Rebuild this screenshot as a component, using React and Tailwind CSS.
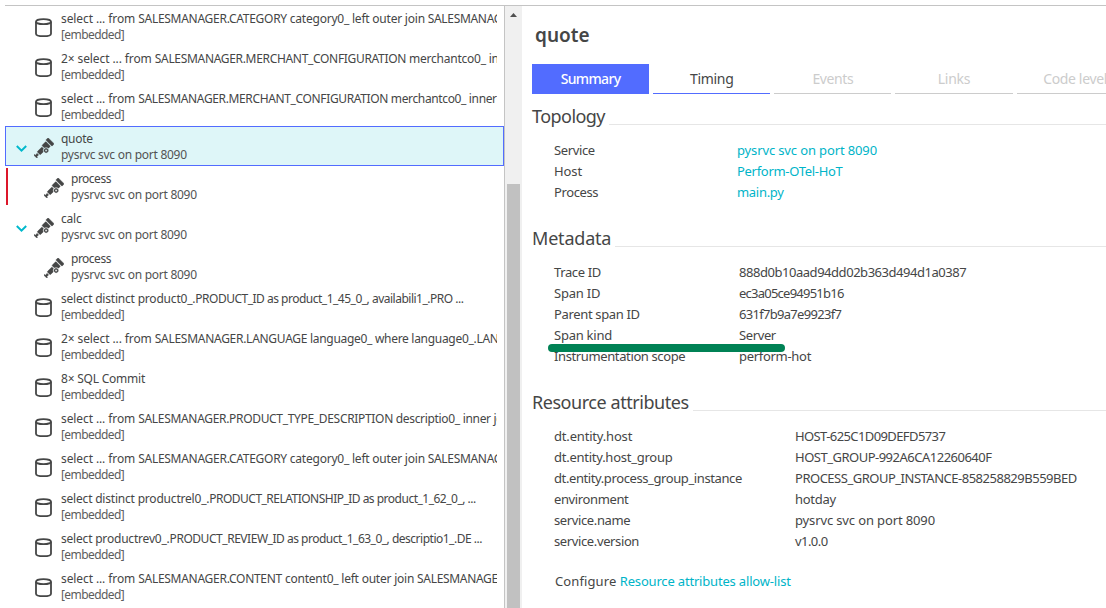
import { SiOpentelemetry } from "react-icons/si";

const LOW = "tracking-[-0.22px]";
const CAP = "tracking-[-0.32px]";
const LEAD = "tracking-[-0.1px]";
const TAIL = "tracking-[-0.5px]";

const spans = [
  { kind: "db", title: [["select ... from ", LEAD], ["SALESMANAGER.CATEGORY", "tracking-[-0.28px]"], [" category0_ left outer join ", LOW], ["SALESMANAGER.CATEGORY", CAP]] },
  { kind: "db", title: [["2× select ... from ", LEAD], ["SALESMANAGER.MERCHANT_CONFIGURATION", CAP], [" merchantco0_ inner join", LOW]] },
  { kind: "db", title: [["select ... from ", LEAD], ["SALESMANAGER.MERCHANT_CONFIGURATION", "tracking-[-0.36px]"], [" merchantco0_ inner", "tracking-[-0.36px]"]] },
  { kind: "otel", title: [["quote", "tracking-[-0.28px]"]], open: true, selected: true },
  { kind: "otel", title: [["process", "tracking-[-0.5px]"]], child: true, failed: true },
  { kind: "otel", title: [["calc", LOW]], open: true },
  { kind: "otel", title: [["process", "tracking-[-0.5px]"]], child: true },
  { kind: "db", title: [["select distinct product0_.", "tracking-[-0.2px]"], ["PRODUCT_ID", "tracking-[-0.5px]"], [" as product_1_45_0_, availabili1_.PRO ...", TAIL]] },
  { kind: "db", title: [["2× select ... from ", LEAD], ["SALESMANAGER.LANGUAGE", "tracking-[-0.28px]"], [" language0_ where language0_.LANGUAGE", "tracking-[-0.3px]"]] },
  { kind: "db", title: [["8× SQL Commit", LOW]] },
  { kind: "db", title: [["select ... from ", LEAD], ["SALESMANAGER.PRODUCT_TYPE_DESCRIPTION", CAP], [" descriptio0_ inner join", "tracking-[-0.32px]"]] },
  { kind: "db", title: [["select ... from ", LEAD], ["SALESMANAGER.CATEGORY", "tracking-[-0.28px]"], [" category0_ left outer join ", LOW], ["SALESMANAGER.CATEGORY", CAP]] },
  { kind: "db", title: [["select distinct productrel0_.", "tracking-[-0.2px]"], ["PRODUCT_RELATIONSHIP_ID", "tracking-[-0.52px]"], [" as product_1_62_0_, ...", TAIL]] },
  { kind: "db", title: [["select productrev0_.", "tracking-[-0.2px]"], ["PRODUCT_REVIEW_ID", "tracking-[-0.46px]"], [" as product_1_63_0_, descriptio1_.DE ...", TAIL]] },
  { kind: "db", title: [["select ... from ", LEAD], ["SALESMANAGER.CONTENT", "tracking-[-0.28px]"], [" content0_ left outer join ", LOW], ["SALESMANAGER.CONTENT", CAP]] },
];

function Cylinder() {
  return (
    <svg className="mt-1 h-5 w-[17px]" viewBox="0 0 17 20" fill="none" stroke="#454646" strokeWidth="1.8">
      <ellipse cx="8.5" cy="3.7" rx="7.5" ry="2.5" />
      <path d="M1 3.7V15.7C1 17.2 4.1 18.2 8.5 18.2S16 17.2 16 15.7V3.7" />
    </svg>
  );
}

function Chevron() {
  return (
    <svg className="h-2 w-3" viewBox="0 0 12 8" fill="none" stroke="#00b9cc" strokeWidth="2">
      <path d="M0.8 1L5.5 5.7L10.2 1" />
    </svg>
  );
}

function SpanRow({ kind, title, open, selected, child, failed }) {
  return (
    <div className={`flex h-10 shrink-0 border ${selected ? "border-[#526cff] bg-[#def6f8]" : "border-transparent"}`}>
      <div className={`my-px h-[37px] w-0.5 shrink-0 ${failed ? "bg-[#dc172a]" : ""}`} />
      <div className="flex w-5 shrink-0 items-center pt-1.5 pl-2">{open && <Chevron />}</div>
      <div className={`flex w-[21px] shrink-0 items-center justify-center ${child ? "ml-[15px]" : "ml-[5px]"}`}>
        {kind === "db" ? (
          <Cylinder />
        ) : (
          <SiOpentelemetry className="mt-[3px] h-5 w-5 shrink-0 stroke-[#454646] stroke-[0.5]" />
        )}
      </div>
      <div className="mr-1.5 ml-[7px] flex min-w-0 flex-1 flex-col overflow-hidden pt-1 text-xs leading-4 whitespace-pre">
        <div>
          {title.map(([text, tracking], i) => (
            <span key={i} className={tracking}>{text}</span>
          ))}
        </div>
        {kind === "db" ? (
          <div className="tracking-[-0.58px] text-[#5c5d5d]">[embedded]</div>
        ) : (
          <div className="tracking-[-0.27px] text-[#525353]">pysrvc svc on port 8090</div>
        )}
      </div>
    </div>
  );
}

function Section({ title, tracking, children }) {
  return (
    <section className="mb-[22px]">
      <div className="mb-[9px] flex h-7 items-center">
        <h2 className={`-mt-0.5 text-lg leading-7 whitespace-nowrap ${tracking}`}>{title}</h2>
        <div className="mb-1.5 ml-1 h-px flex-1 self-end bg-[#e6e6e6]" />
      </div>
      <dl className="pl-[22px]">{children}</dl>
    </section>
  );
}

function Field({ label, value, labelWidth, labelTracking = "tracking-[-0.38px]", tracking, link }) {
  return (
    <div className="flex h-[21px] items-center text-[13px] leading-[21px] whitespace-nowrap">
      <dt className={`${labelWidth} shrink-0 ${labelTracking}`}>{label}</dt>
      <dd className={`${tracking} ${link ? "text-[#00b4c8]" : ""}`}>{value}</dd>
    </div>
  );
}

const tabs = [
  { label: "Summary", style: "bg-[#526cff] font-medium text-white tracking-[-0.65px]" },
  { label: "Timing", style: "border-b border-[#526cff] pt-px tracking-[-0.3px]" },
  { label: "Events", style: "border-b border-[#ccc] pt-px text-[#ccc] tracking-[-0.4px]" },
  { label: "Links", style: "border-b border-[#ccc] pt-px text-[#ccc] tracking-[-0.3px]" },
  { label: "Code level", style: "border-b border-[#ccc] pt-px text-[#ccc] tracking-[-0.35px]" },
];

export default function App() {
  return (
    <div className="h-[608px] w-[1106px] overflow-hidden bg-white pt-[5px] pl-[5px] font-['Noto_Sans','Open_Sans',sans-serif] text-[#454646]">
      <div className="flex h-full border-t border-[#c4c4c4]">
        <div className="flex w-[499px] shrink-0 flex-col overflow-hidden">
          {spans.map((span, i) => (
            <SpanRow key={i} {...span} />
          ))}
        </div>
        <div className="flex w-[18px] shrink-0 flex-col border-l border-[#c4c4c4] bg-[#f0f0f0]">
          <svg className="mt-[7px] ml-[5px] h-1 w-[7px]" viewBox="0 0 7 4" fill="#505050">
            <path d="M0 4L3.5 0L7 4Z" />
          </svg>
          <div className="mt-[167px] ml-0.5 w-[13px] flex-1 bg-[#c1c1c1]" />
        </div>
        <main className="min-w-0 flex-1 overflow-hidden pl-2.5">
          <h1 className="mt-[13px] pl-[3px] text-[19px] leading-8 font-semibold">quote</h1>
          <nav className="mt-[13px] mb-[9px] flex gap-1">
            {tabs.map(({ label, style }) => (
              <div key={label} className={`flex h-[30px] w-[117.13px] shrink-0 items-center justify-center text-sm whitespace-nowrap ${style}`}>
                {label}
              </div>
            ))}
          </nav>
          <Section title="Topology" tracking="tracking-[-0.55px]">
            <Field labelWidth="w-[183px]" label="Service" value="pysrvc svc on port 8090" tracking="tracking-[-0.13px]" link />
            <Field labelWidth="w-[183px]" label="Host" labelTracking="tracking-[-0.1px]" value="Perform-OTel-HoT" tracking="tracking-[-0.3px]" link />
            <Field labelWidth="w-[183px]" label="Process" value="main.py" tracking="tracking-[-0.3px]" link />
          </Section>
          <Section title="Metadata" tracking="tracking-[-0.2px]">
            <Field labelWidth="w-[185px]" label="Trace ID" value="888d0b10aad94dd02b363d494d1a0387" tracking="tracking-[-0.46px]" />
            <Field labelWidth="w-[185px]" label="Span ID" labelTracking="tracking-[-0.2px]" value="ec3a05ce94951b16" tracking="tracking-[-0.76px]" />
            <Field labelWidth="w-[185px]" label="Parent span ID" labelTracking="tracking-[-0.35px]" value="631f7b9a7e9923f7" tracking="tracking-[-0.7px]" />
            <div className="relative">
              <Field labelWidth="w-[185px]" label="Span kind" labelTracking="tracking-[-0.25px]" value="Server" tracking="tracking-[-0.38px]" />
              <div className="absolute top-[19px] -left-1.5 z-10 h-2 w-[237px] rounded-full bg-[#008255]" />
            </div>
            <Field labelWidth="w-[185px]" label="Instrumentation scope" value="perform-hot" tracking="tracking-[-0.3px]" />
          </Section>
          <Section title="Resource attributes" tracking="tracking-[-0.45px]">
            <Field labelWidth="w-[241px]" label="dt.entity.host" labelTracking="tracking-[-0.18px]" value="HOST-625C1D09DEFD5737" tracking="tracking-[-0.6px]" />
            <Field labelWidth="w-[241px]" label="dt.entity.host_group" labelTracking="tracking-[-0.25px]" value="HOST_GROUP-992A6CA12260640F" tracking="tracking-[-0.5px]" />
            <Field labelWidth="w-[241px]" label="dt.entity.process_group_instance" labelTracking="tracking-[-0.4px]" value="PROCESS_GROUP_INSTANCE-858258829B559BED" tracking="tracking-[-0.49px]" />
            <Field labelWidth="w-[241px]" label="environment" value="hotday" tracking="tracking-[-0.3px]" />
            <Field labelWidth="w-[241px]" label="service.name" value="pysrvc svc on port 8090" tracking="tracking-[-0.13px]" />
            <Field labelWidth="w-[241px]" label="service.version" value="v1.0.0" tracking="tracking-[-0.55px]" />
          </Section>
          <p className="-mt-[3px] pl-[23px] text-[13px] leading-[21px] tracking-[0.1px]">
            Configure <a className="tracking-[-0.18px] text-[#00b4c8]">Resource attributes allow-list</a>
          </p>
        </main>
      </div>
    </div>
  );
}
